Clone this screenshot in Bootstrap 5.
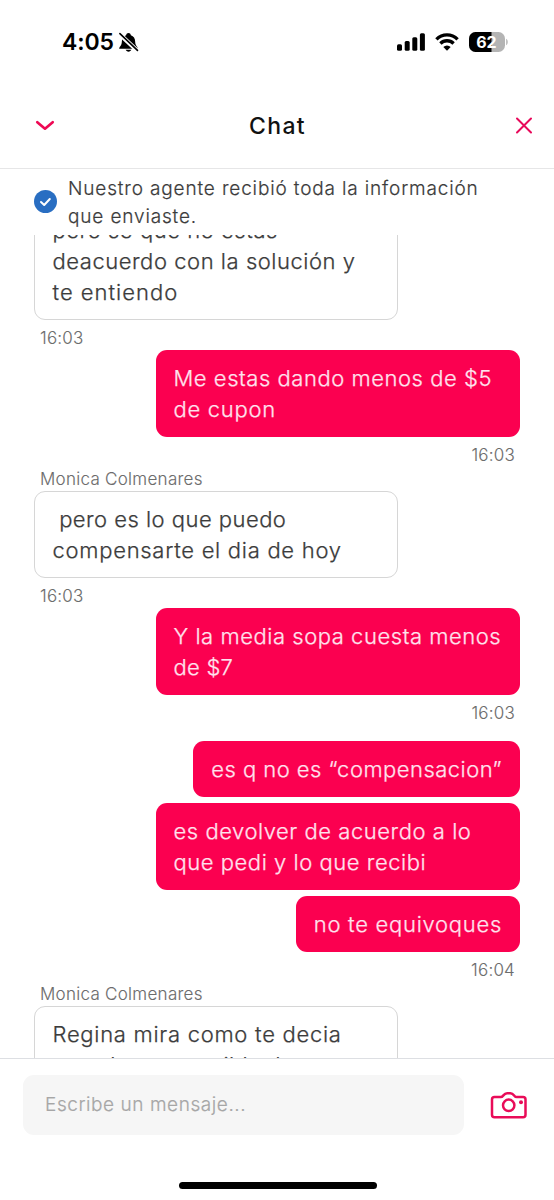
<!DOCTYPE html>
<html lang="es">
<head>
<meta charset="utf-8">
<meta name="viewport" content="width=device-width, initial-scale=1">
<title>Chat</title>
<link href="https://cdn.jsdelivr.net/npm/bootstrap@5.3.0/dist/css/bootstrap.min.css" rel="stylesheet">
<style>
  body { font-family: Inter, "Liberation Sans", sans-serif; background: #fff; color: #3b3b3b; font-weight: 300; }
  .phone { height: 1200px; overflow: hidden; }
  svg { display: block; flex: none; }
  .statusbar { height: 84px; padding: 0 46px 0 62px; color: #000; }
  .clock { font-size: 23px; font-weight: 600; line-height: 28px; letter-spacing: -.1px; }
  .wifi, .battery { margin-left: 10px; }
  .titlebar { height: 85px; padding: 0 20px 0 34px; border-bottom: 1px solid #e6e6e7; }
  .title { font-size: 23px; font-weight: 500; letter-spacing: 1.3px; color: #111; line-height: 30px; margin: 0 15px 0 0; }
  .notice { height: 66px; padding: 2px 34px 0; gap: 11px; font-size: 19px; line-height: 28px; letter-spacing: .85px; -webkit-text-stroke: .2px; }
  .notice svg { margin-top: -3px; }
  .feed { height: 823px; padding: 0 34px; overflow: hidden; }
  .feed > :first-child { margin-top: -33px; }
  .bubble { width: 364.5px; flex: none; padding: 13px 18px 12px; border-radius: 11px; font-size: 22px; line-height: 31px; letter-spacing: .54px; white-space: pre; -webkit-text-stroke: .25px; }
  .agent { border: 1px solid #d6d6d6; padding: 12px 17.5px 11px; width: 364px; }
  .client { background: #fb0050; color: #ffe3ee; align-self: flex-end; }
  .fit { width: auto; }
  .snug { letter-spacing: .47px; }
  .mid { letter-spacing: .72px; }
  .loose { letter-spacing: 1px; }
  .tight { letter-spacing: .25px; }
  .stamp { flex: none; height: 30px; padding: 6px 5px 0 6px; font-size: 17px; line-height: 24px; color: #6c6c6c; letter-spacing: .2px; -webkit-text-stroke: .1px; }
  .sender { flex: none; padding: 0 6px; font-size: 17px; line-height: 24px; color: #6c6c6c; letter-spacing: .28px; -webkit-text-stroke: .1px; }
  .gap-lg { margin-top: 16px; }
  .gap-sm { margin-top: 6px; }
  .composer { height: 142px; border-top: 1px solid #dddfe3; padding: 16px 26px 0 23px; }
  .field { width: 441px; height: 60px; border: 0; border-radius: 11px; background: #f6f6f6; padding: 0 22px 1px; font-size: 19px; font-weight: 300; letter-spacing: .57px; -webkit-text-stroke: .2px; }
  .field::placeholder { color: #a6a6a6; opacity: 1; }
  .home { width: 198px; height: 7px; border-radius: 4px; background: #000; margin: 47px 0 0 156px; }
</style>
</head>
<body>
<main class="phone d-flex flex-column">
  <div class="statusbar d-flex align-items-center flex-shrink-0">
    <span class="clock">4:05</span>
    <svg class="ms-1" width="21" height="21" viewBox="0 0 22 22"><path d="M1.200 17.600c.2-2.200 2.800-3.300 2.800-7.300 0-3.600 1.700-6.200 4.500-7C8.800 1.700 9.700 1 11 1s2.200.7 2.500 2.300c2.800.8 4.500 3.400 4.500 7 0 4 2.600 5.100 2.800 7.300z"/><path d="M8 18.700h6c-.6 1.300-1.600 1.900-3 1.900s-2.400-.6-3-1.900z"/><path d="M1.300 1.900 20 19.400" stroke="#fff" stroke-width="4.600"/><path d="M2 1.700 20.400 19.300" stroke="#000" stroke-width="1.700" stroke-linecap="round"/></svg>
    <svg class="ms-auto" width="28" height="18" viewBox="0 0 28 18"><rect y="11.200" width="5" height="6.600" rx="1.500"/><rect x="7.700" y="8" width="5" height="9.800" rx="1.500"/><rect x="15.300" y="4.200" width="5" height="13.600" rx="1.500"/><rect x="22.900" y=".3" width="5" height="17.500" rx="1.500"/></svg>
    <svg class="wifi" width="24" height="18" viewBox="0 0 24 18"><g fill="none" stroke="#000" stroke-width="3.300"><path d="M1.400 6.300a15 15 0 0 1 21.200 0"/><path d="M5.400 10.500a9.300 9.300 0 0 1 13.200 0"/></g><path d="M12 17.700 8.300 14a5.300 5.300 0 0 1 7.400 0z"/></svg>
    <svg class="battery" width="39" height="20" viewBox="0 0 39 20"><defs><clipPath id="cell"><rect width="36" height="20" rx="6.500"/></clipPath></defs><g clip-path="url(#cell)"><rect width="36" height="20" fill="#b4b4b4"/><rect width="22.500" height="20"/></g><path d="M37.200 6.800c2 .8 2 5.600 0 6.400z" fill="#b4b4b4"/><text x="17.400" y="15.800" text-anchor="middle" font-family="Inter" font-weight="700" font-size="16" fill="#fff">62</text></svg>
  </div>

  <header class="titlebar d-flex align-items-center justify-content-between flex-shrink-0">
    <svg width="22" height="14" viewBox="0 0 22 14"><path d="m3.300 3.200 7.700 6.500 7.700-6.500" fill="none" stroke="#ee0954" stroke-width="2.700" stroke-linecap="round" stroke-linejoin="round"/></svg>
    <h1 class="title">Chat</h1>
    <svg width="20" height="20" viewBox="0 0 20 20"><path d="m3 2.500 14 14M17 2.500l-14 14" stroke="#e8095a" stroke-width="2" stroke-linecap="round"/></svg>
  </header>

  <div class="notice d-flex align-items-center flex-shrink-0">
    <svg width="23" height="23" viewBox="0 0 23 23"><circle cx="11.500" cy="11.500" r="11.500" fill="#296ec2"/><path d="m7 12 3.200 3 5.600-6" fill="none" stroke="#fff" stroke-width="2" stroke-linecap="round" stroke-linejoin="round"/></svg>
    <div class="text-nowrap">Nuestro agente recibió toda la información<br>que enviaste.</div>
  </div>

  <section class="feed d-flex flex-column flex-shrink-0">
    <div class="bubble agent">pero se que no estas
deacuerdo con la solución y
<span class="loose">te entiendo</span></div>
    <div class="stamp">16:03</div>
    <div class="bubble client">Me estas dando menos de $5
<span class="mid">de cupon</span></div>
    <div class="stamp text-end">16:03</div>
    <div class="sender">Monica Colmenares</div>
    <div class="bubble agent"><span class="snug"> pero es lo que puedo</span>
<span class="mid">compensarte el dia de hoy</span></div>
    <div class="stamp">16:03</div>
    <div class="bubble client">Y la media sopa cuesta menos
<span class="tight">de $7</span></div>
    <div class="stamp text-end">16:03</div>
    <div class="bubble client fit snug gap-lg">es q no es “compensacion”</div>
    <div class="bubble client gap-sm">es devolver de acuerdo a lo
que pedi y lo que recibi</div>
    <div class="bubble client fit mid gap-sm">no te equivoques</div>
    <div class="stamp text-end">16:04</div>
    <div class="sender">Monica Colmenares</div>
    <div class="bubble agent"><span class="mid">Regina mira como te decia</span>
<span class="tight">pues lo mas posible de</span></div>
  </section>

  <footer class="composer flex-shrink-0">
    <div class="d-flex align-items-center justify-content-between">
      <input class="field" type="text" placeholder="Escribe un mensaje..." aria-label="Mensaje">
      <svg width="39" height="30" viewBox="0 0 39 30"><g fill="none" stroke="#e90c58" stroke-width="2.500" stroke-linejoin="round"><path d="M5.500 7.100h6.200c1.300 0 1.900-.7 2.700-1.700 1-1.300 2-2.100 3.700-2.100h3.300c1.700 0 2.700.8 3.700 2.100.8 1 1.400 1.700 2.700 1.700h6.200c1.500 0 2.500 1 2.500 2.500v15.200c0 1.500-1 2.500-2.500 2.500H5.500C4 27.300 3 26.300 3 24.800V9.600c0-1.500 1-2.500 2.500-2.500z"/><circle cx="19.700" cy="15.300" r="5.700"/></g><circle cx="32" cy="12.200" r="2" fill="#e90c58"/></svg>
    </div>
    <div class="home"></div>
  </footer>
</main>
<script src="https://cdn.jsdelivr.net/npm/bootstrap@5.3.0/dist/js/bootstrap.bundle.min.js"></script>
</body>
</html>
